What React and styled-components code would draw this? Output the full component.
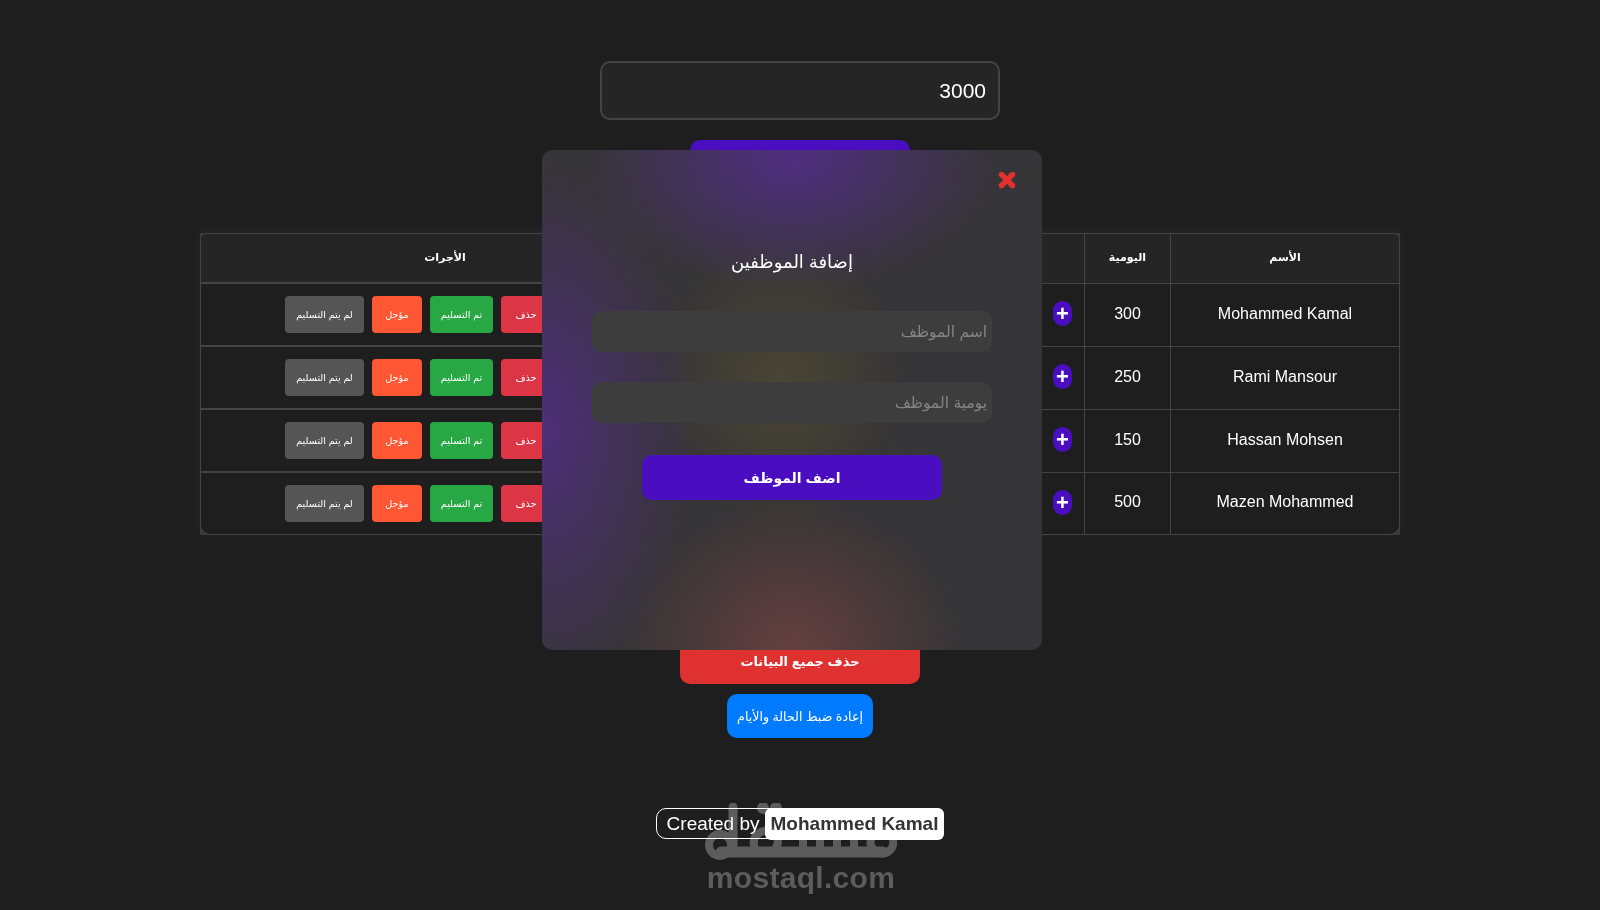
import React from "react";
import styled, { createGlobalStyle } from "styled-components";

const GlobalStyle = createGlobalStyle`
  * { box-sizing: border-box; }
  html, body {
    margin: 0;
    background: #1e1e1e;
    color: #fff;
    font-family: "Liberation Sans", "DejaVu Sans", sans-serif;
  }
`;

const Page = styled.div`
  position: relative;
  height: 910px;
  overflow: hidden;
  display: flex;
  flex-direction: column;
  align-items: center;
  padding-top: 61px;
`;

const BudgetInput = styled.input`
  width: 400px;
  height: 59px;
  padding: 0 12px;
  border: 2px solid #444;
  border-radius: 10px;
  background: #252525;
  color: #fff;
  font: 21px "Liberation Sans", sans-serif;
  text-align: right;
  outline: none;
`;

const PrimaryButton = styled.button`
  width: ${p => p.$width}px;
  height: ${p => p.$height}px;
  margin-top: ${p => p.$top || 0}px;
  border: none;
  border-radius: 10px;
  background: ${p => p.$color};
  color: #fff;
  font: ${p => p.$weight || "bold"} ${p => p.$size || 14}px "Liberation Sans", "DejaVu Sans", sans-serif;
`;

const Table = styled.table`
  width: 1200px;
  margin-top: 40px;
  border-collapse: separate;
  border-spacing: 0;
  table-layout: fixed;
  background: #3a3a3a;
  box-shadow: 0 -2px 10px rgba(255, 255, 255, 0.05);

  tr:last-child td:first-child { border-bottom-left-radius: 10px; }
  tr:last-child td:last-child { border-bottom-right-radius: 10px; }
  th:first-child { border-top-left-radius: 6px; }
  th:last-child { border-top-right-radius: 6px; }
`;

const HeadCell = styled.th`
  height: 51px;
  padding: 0 0 2px;
  background: #252525;
  border: 1px solid #444;
  border-width: 1px 1px 1px 0;
  font-size: 11px;
  font-weight: bold;
  &:first-child { border-left-width: 1px; border-bottom-width: 2px; }
`;

const Cell = styled.td`
  height: 63px;
  padding: 0 0 ${p => p.$lift || 0}px;
  background: #1e1e1e;
  border-right: 1px solid #444;
  border-bottom: 1px solid #444;
  font-size: 16px;
  text-align: center;
  &:first-child { border-left: 1px solid #444; border-bottom-width: 2px; }
  tr:last-child & { height: 62px; }
  tr:last-child &:first-child { border-bottom-width: 1px; }
`;

const ActionRow = styled.div`
  display: flex;
  gap: 8px;
  padding-left: 84px;
`;

const ActionButton = styled.button`
  width: ${p => p.$width}px;
  height: 37px;
  padding: 0;
  border: none;
  border-radius: 4px;
  background: ${p => p.$color};
  color: #fff;
  font: 9.7px "Liberation Sans", "DejaVu Sans", sans-serif;
  white-space: nowrap;
`;

const PlusWrap = styled.div`
  display: flex;
  justify-content: flex-end;
  padding-right: 12px;
`;

const PlusButton = styled.button`
  width: 19px;
  height: 25px;
  padding: 0;
  border: none;
  border-radius: 10px;
  background: #4a0dbf;
  color: #fff;
  font: bold 22px/25px "Liberation Sans", sans-serif;
`;

const Credit = styled.p`
  display: flex;
  align-items: center;
  height: 31px;
  margin: 70px 0 0;
  padding-left: 10px;
  border: 1px solid #fff;
  border-radius: 10px;
  font-size: 19px;
`;

const CreditName = styled.span`
  height: 32px;
  margin-left: 5px;
  margin-right: -1px;
  padding: 0 6px;
  border-radius: 6px;
  background: #fff;
  color: #333;
  font-weight: bold;
  line-height: 31px;
`;

const Modal = styled.div`
  position: absolute;
  top: 150px;
  left: 542px;
  width: 500px;
  height: 500px;
  padding-top: 95px;
  display: flex;
  flex-direction: column;
  align-items: center;
  border-radius: 10px;
  background:
    radial-gradient(rgba(255, 255, 255, 0.018) 1px, transparent 1px) 0 0 / 3px 3px,
    radial-gradient(ellipse 210px 130px at 50% 2%, rgba(80, 46, 132, 0.95), rgba(80, 46, 132, 0) 100%),
    radial-gradient(ellipse 155px 270px at 0% 56%, rgba(78, 46, 124, 0.95), rgba(78, 46, 124, 0) 100%),
    radial-gradient(ellipse 125px 150px at 48% 46%, rgba(84, 78, 50, 0.65), rgba(84, 78, 50, 0) 100%),
    radial-gradient(ellipse 170px 150px at 50% 100%, rgba(104, 64, 64, 0.95), rgba(104, 64, 64, 0) 100%),
    #353436;
`;

const CloseButton = styled.button`
  position: absolute;
  top: 21px;
  right: 26px;
  padding: 0;
  display: flex;
  border: none;
  background: none;
  color: #e53030;
`;

const ModalTitle = styled.h2`
  margin: 0;
  font-size: 18px;
  font-weight: normal;
  line-height: 34px;
`;

const ModalInput = styled.input`
  width: 400px;
  height: 41px;
  margin-top: ${p => p.$top}px;
  padding: 0 5px;
  border: none;
  border-radius: 10px;
  background: #3d3d3d;
  color: #fff;
  font: 15.5px "Liberation Sans", "DejaVu Sans", sans-serif;
  outline: none;
  &::placeholder { color: #848484; }
`;

const Watermark = styled.div`
  position: absolute;
  top: 803px;
  left: 705px;
  width: 192px;
  display: flex;
  flex-direction: column;
  align-items: center;
  color: #5c5c5c;
  mix-blend-mode: lighten;
  pointer-events: none;
`;

const WatermarkText = styled.span`
  margin-top: -3px;
  font-size: 30px;
  font-weight: bold;
  letter-spacing: 0.3px;
  line-height: 32px;
  white-space: nowrap;
`;

const employees = [
  { name: "Mohammed Kamal", daily: 300 },
  { name: "Rami Mansour", daily: 250 },
  { name: "Hassan Mohsen", daily: 150 },
  { name: "Mazen Mohammed", daily: 500 }
];

const App = () => (
  <Page>
    <GlobalStyle />
    <BudgetInput readOnly value="3000" />
    <PrimaryButton $width={220} $height={53} $top={20} $color="#4a0dbf" />
    <Table>
      <colgroup>
        <col width="490" />
        <col width="395" />
        <col width="86" />
        <col width="229" />
      </colgroup>
      <thead>
        <tr>
          <HeadCell>الأجرات</HeadCell>
          <HeadCell />
          <HeadCell>اليومية</HeadCell>
          <HeadCell>الأسم</HeadCell>
        </tr>
      </thead>
      <tbody>
        {employees.map(e => (
          <tr key={e.name}>
            <Cell>
              <ActionRow>
                <ActionButton $width={79} $color="#555">لم يتم التسليم</ActionButton>
                <ActionButton $width={50} $color="#ff5733">مؤجل</ActionButton>
                <ActionButton $width={63} $color="#28a745">تم التسليم</ActionButton>
                <ActionButton $width={50} $color="#dc3545">حذف</ActionButton>
              </ActionRow>
            </Cell>
            <Cell $lift={3}>
              <PlusWrap>
                <PlusButton>+</PlusButton>
              </PlusWrap>
            </Cell>
            <Cell $lift={3}>{e.daily}</Cell>
            <Cell $lift={3}>{e.name}</Cell>
          </tr>
        ))}
      </tbody>
    </Table>
    <PrimaryButton $width={240} $height={46} $top={103} $size={13} $color="#e03131">
      حذف جميع البيانات
    </PrimaryButton>
    <PrimaryButton $width={146} $height={44} $top={10} $size={12.6} $weight="normal" $color="#007bff">
      إعادة ضبط الحالة والأيام
    </PrimaryButton>
    <Credit>
      Created by<CreditName>Mohammed Kamal</CreditName>
    </Credit>

    <Modal>
      <CloseButton>
        <svg width="18" height="18" viewBox="0 0 18 18" fill="none" stroke="currentColor" strokeWidth="5.4" strokeLinecap="round">
          <path d="M3.5 3.5 L14.5 14.5 M14.5 3.5 L3.5 14.5" />
        </svg>
      </CloseButton>
      <ModalTitle dir="rtl">إضافة الموظفين</ModalTitle>
      <ModalInput $top={32} dir="rtl" placeholder="اسم الموظف" />
      <ModalInput $top={30} dir="rtl" placeholder="يومية الموظف" />
      <PrimaryButton $width={300} $height={45} $top={32} $color="#4a0dbf">
        اضف الموظف
      </PrimaryButton>
    </Modal>

    <Watermark>
      <svg width="192" height="62" viewBox="0 0 192 62" fill="none" stroke="currentColor" strokeLinecap="round">
        <circle cx="15" cy="42" r="11" strokeWidth="8" />
        <path d="M28 4 V42" strokeWidth="9" />
        <path d="M16 49 H178" strokeWidth="11" />
        <circle cx="177" cy="39" r="11.5" strokeWidth="8" />
        <path d="M98 30 V48 M115 30 V48 M132 30 V48 M149 30 V48" strokeWidth="8" />
        <path d="M50 46 Q46 36 54 30 Q62 25 70 30 Q76 38 70 46" strokeWidth="8" />
        <circle cx="58" cy="5" r="3" strokeWidth="6" />
        <circle cx="71" cy="5" r="3" strokeWidth="6" />
      </svg>
      <WatermarkText>mostaql.com</WatermarkText>
    </Watermark>
  </Page>
);

export default App;
